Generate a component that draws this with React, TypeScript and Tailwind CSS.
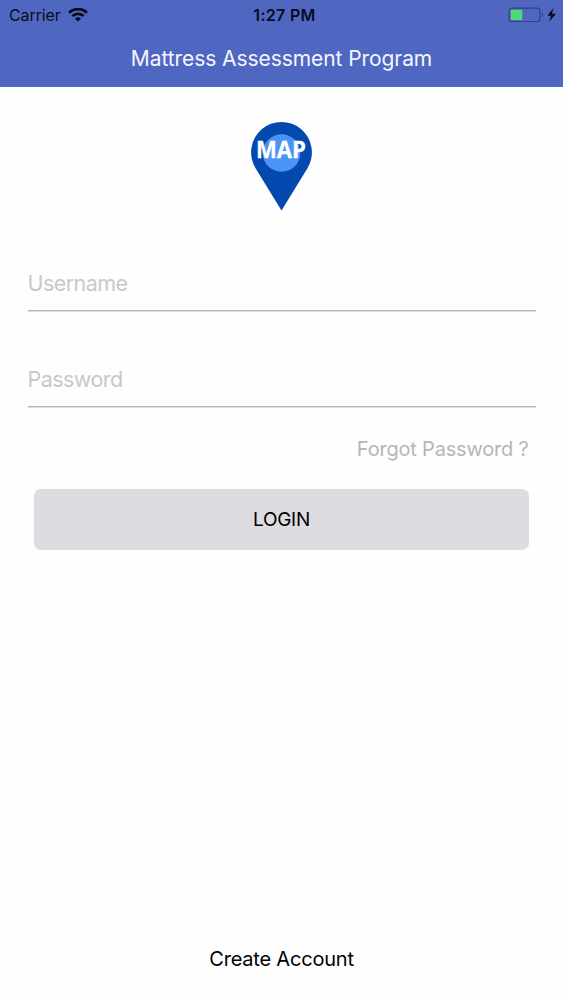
import React, { useState } from 'react';

interface FieldProps {
  label: string;
  type: string;
  value: string;
  onChange: (value: string) => void;
}

function Field({ label, type, value, onChange }: FieldProps) {
  return (
    <div className="border-b border-[#b4b3b7] shadow-[0_1px_0_#dddcdf]">
      <input
        type={type}
        value={value}
        placeholder={label}
        aria-label={label}
        onChange={(e) => onChange(e.target.value)}
        className="block h-[55px] w-full bg-transparent text-[21.5px] tracking-[-0.55px] text-black outline-none placeholder:text-[#c8c8cc]"
      />
    </div>
  );
}

function WifiIcon() {
  return (
    <svg className="h-[14px] w-[20px]" viewBox="0 0 20 14" fill="none" stroke="#080b1c" strokeWidth="2.7">
      <path d="M1 4.8C6 -0.2 14 -0.2 19 4.8" />
      <path d="M4.3 8.1C7.5 5 12.5 5 15.7 8.1" />
      <path d="M10 13.6L6.9 10.4C8.7 8.8 11.3 8.8 13.1 10.4Z" fill="#080b1c" stroke="none" />
    </svg>
  );
}

function BatteryIcon() {
  return (
    <svg className="h-[16px] w-[50px]" viewBox="0 0 50 16">
      <rect x="1.1" y="1.1" width="30.8" height="13.4" rx="2.5" fill="none" stroke="#34427f" strokeWidth="1.2" />
      <rect x="2.7" y="2.7" width="11.6" height="10.2" rx="1" fill="#4fd97b" />
      <path d="M33.8 5.5C35.5 6.3 35.5 9.3 33.8 10.1Z" fill="#2c3972" />
      <path d="M45.4 1L39.4 8.7H43L41.2 14.6L48 6.8H44Z" fill="#080b1c" />
    </svg>
  );
}

function Logo() {
  return (
    <svg className="h-[90px] w-[62px]" viewBox="0 0 62 90">
      <path d="M31.5 89.5L5.7 47.4A30.4 30.4 0 1 1 57.3 47.4Z" fill="#0349b0" />
      <circle cx="31.5" cy="32" r="18.8" fill="#4a94f6" />
      <text
        x="31"
        y="37.3"
        textAnchor="middle"
        textLength="50"
        lengthAdjust="spacingAndGlyphs"
        fill="white"
        stroke="white"
        strokeWidth="0.3"
        className="font-['Open_Sans',sans-serif] text-[22.5px] font-bold"
      >
        MAP
      </text>
    </svg>
  );
}

export default function App() {
  const [username, setUsername] = useState('');
  const [password, setPassword] = useState('');

  return (
    <div className="flex h-screen flex-col bg-[#fefefe] font-['Inter',sans-serif] text-black">
      <header className="h-[87px] shrink-0 bg-[#5067c2]">
        {/* Status bar */}
        <div className="grid h-[29px] grid-cols-3 items-center pl-[9px] pr-[5px] text-[#080b1c]">
          <div className="flex items-center gap-[7px]">
            <span className="text-[16px] leading-[26px] tracking-[-0.1px]">Carrier</span>
            <WifiIcon />
          </div>
          <span className="pl-[2px] text-center text-[16px] font-semibold tracking-[0.3px]">1:27 PM</span>
          <div className="flex justify-end">
            <BatteryIcon />
          </div>
        </div>
        <h1 className="text-center text-[21px] leading-[59px] tracking-[-0.07px] text-[#f3f6ff]">
          Mattress Assessment Program
        </h1>
      </header>

      <main className="flex flex-1 flex-col px-[27.5px] pt-[34px]">
        <div className="flex justify-center pr-px">
          <Logo />
        </div>

        <form className="mt-[44px]" onSubmit={(e) => e.preventDefault()}>
          <div className="flex flex-col gap-[40px]">
            <Field label="Username" type="text" value={username} onChange={setUsername} />
            <Field label="Password" type="password" value={password} onChange={setPassword} />
          </div>
          <div className="mt-[26px] flex justify-end pr-[7px]">
            <button type="button" className="text-[20px] leading-[32px] tracking-[-0.2px] text-[#b6b5b9]">
              Forgot Password ?
            </button>
          </div>
          <div className="mt-[24px] px-[6.5px]">
            <button
              type="submit"
              className="h-[61px] w-full rounded-[7px] bg-[#dedce0] pt-[2px] text-[19px] tracking-[-0.3px]"
            >
              LOGIN
            </button>
          </div>
        </form>

        <button type="button" className="mx-auto mb-[25px] mt-auto text-[20px] leading-[32px] tracking-[-0.2px]">
          Create Account
        </button>
      </main>
    </div>
  );
}
